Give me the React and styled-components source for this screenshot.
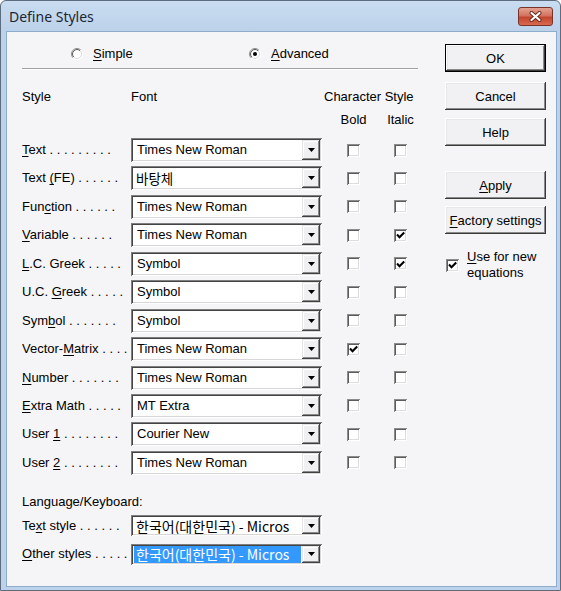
import { Fragment } from "react";
import styled, { createGlobalStyle } from "styled-components";

const GlobalStyle = createGlobalStyle`
  html, body { margin: 0; padding: 0; background: #ffffff; }
  body {
    font-family: "Liberation Sans", Arial, "Noto Sans CJK KR", sans-serif;
    font-size: 13px;
    color: #000;
  }
`;

const styleRows = [
  { pre: "", key: "T", post: "ext . . . . . . . . .", font: "Times New Roman" },
  { pre: "Text ", key: "(", post: "FE) . . . . . .", font: "바탕체", cjk: true },
  { pre: "Fun", key: "c", post: "tion . . . . . .", font: "Times New Roman" },
  { pre: "", key: "V", post: "ariable . . . . . .", font: "Times New Roman", italic: true },
  { pre: "", key: "L", post: ".C. Greek . . . . .", font: "Symbol", italic: true },
  { pre: "U.C. ", key: "G", post: "reek . . . . .", font: "Symbol" },
  { pre: "Sym", key: "b", post: "ol . . . . . . .", font: "Symbol" },
  { pre: "Vector-", key: "M", post: "atrix . . . .", font: "Times New Roman", bold: true },
  { pre: "", key: "N", post: "umber . . . . . . .", font: "Times New Roman" },
  { pre: "", key: "E", post: "xtra Math . . . . .", font: "MT Extra" },
  { pre: "User ", key: "1", post: " . . . . . . . .", font: "Courier New" },
  { pre: "User ", key: "2", post: " . . . . . . . .", font: "Times New Roman" },
];

// the IME name is cut by the drop button in the original dialog
const langRows = [
  { pre: "Te", key: "x", post: "t style  . . . . . .", value: "한국어(대한민국) - Micros" },
  { pre: "", key: "O", post: "ther styles . . . . .", value: "한국어(대한민국) - Micros", selected: true },
];

const Window = styled.div`
  box-sizing: border-box;
  width: 561px;
  height: 591px;
  border: 1px solid #5e6c7f;
  border-radius: 6px 6px 0 0;
  background: linear-gradient(#c9dcf0 0px, #bcd2ea 30px, #bcd2ea 100%);
  padding: 0 3px 3px 5px;
  display: flex;
  flex-direction: column;
  overflow: hidden;
`;

const TitleBar = styled.div`
  height: 30px;
  flex: none;
  display: flex;
  align-items: center;
  padding: 0 4px 0 3px;
`;

const Title = styled.div`
  font-family: "Noto Sans", "Liberation Sans", sans-serif;
  font-size: 14px;
  color: #1c2636;
`;

const CloseButton = styled.div`
  box-sizing: border-box;
  margin-left: auto;
  width: 35px;
  height: 19px;
  border: 1px solid #7a3327;
  border-radius: 3px;
  background: linear-gradient(#e2a394 0%, #d4735f 45%, #c4452d 55%, #d86a50 100%);
  display: flex;
  align-items: center;
  justify-content: center;
`;

const Client = styled.div`
  flex: 1;
  border: 1px solid #8eaccc;
  background: #f5f4f7;
  display: flex;
  gap: 27px;
  padding: 12px 9px 0 15px;
`;

const LeftPanel = styled.div`
  width: 396px;
  flex: none;
  display: flex;
  flex-direction: column;
`;

const RightPanel = styled.div`
  width: 101px;
  flex: none;
  display: flex;
  flex-direction: column;
`;

const RadioRow = styled.div`
  height: 18px;
  margin-top: 1px;
  display: grid;
  grid-template-columns: 178px auto;
  align-items: center;
  padding-left: 49px;
`;

const RadioOption = styled.div`
  display: flex;
  align-items: center;
  gap: 10px;
  line-height: 16px;
`;

const Separator = styled.div`
  margin-top: 5px;
  border-top: 1px solid #a0a0a0;
  border-bottom: 1px solid #ffffff;
`;

const Columns = styled.div`
  display: grid;
  grid-template-columns: 109px 191px 25px 13px 34px 13px;
  margin-top: ${(p) => p.$top}px;
  line-height: 16px;
  white-space: nowrap;
`;

const StyleGrid = styled(Columns)`
  grid-auto-rows: 28.45px;
  align-items: center;
`;

const LangGrid = styled.div`
  display: grid;
  grid-template-columns: 109px 191px;
  grid-auto-rows: 28.5px;
  align-items: center;
  margin-top: 1.75px;
`;

const Heading = styled.div`
  grid-column: ${(p) => p.$col};
  padding-left: ${(p) => p.$pad || 0}px;
`;

const CenterHeading = styled.div`
  grid-column: ${(p) => p.$col};
  display: flex;
  justify-content: center;
`;

const Label = styled.div`
  white-space: nowrap;
  overflow: hidden;
  line-height: 16px;
`;

const Plain = styled.div`
  margin-top: ${(p) => p.$top}px;
  line-height: 16px;
`;

const Combo = styled.div`
  box-sizing: border-box;
  height: ${(p) => p.$h}px;
  display: flex;
  padding: 2px;
  background: #ffffff;
  box-shadow: inset 1px 1px #7e7e7e, inset -1px -1px #ffffff,
    inset 2px 2px #444444, inset -2px -2px #d8d6d8;
`;

const ComboText = styled.div`
  flex: 1;
  min-width: 0;
  overflow: hidden;
  white-space: nowrap;
  display: flex;
  align-items: center;
  margin: 0 1px;
  padding-left: ${(p) => (p.$cjk ? 2 : 3)}px;
  font-family: ${(p) =>
    p.$cjk
      ? `"Noto Sans CJK KR", "Liberation Sans", sans-serif`
      : `"Liberation Sans", Arial, sans-serif`};
  font-size: ${(p) => p.$size || "13px"};
  background: ${(p) => (p.$selected ? "#3399ff" : "transparent")};
  color: ${(p) => (p.$selected ? "#ffffff" : "#000000")};
`;

const DropButton = styled.div`
  width: 18px;
  flex: none;
  background: #f0eff1;
  display: flex;
  align-items: center;
  justify-content: center;
  box-shadow: inset -1px -1px #404040, inset 1px 1px #e6e4e6,
    inset -2px -2px #8a8a8a, inset 2px 2px #ffffff;
`;

const CheckBox = styled.div`
  box-sizing: border-box;
  width: 13px;
  height: 13px;
  background: #ffffff;
  display: flex;
  align-items: center;
  justify-content: center;
  grid-column: ${(p) => p.$col || "auto"};
  box-shadow: inset 1px 1px #8c8c8c, inset -1px -1px #ffffff,
    inset 2px 2px #5c5c5c, inset -2px -2px #dedcde;
`;

const Button = styled.div`
  box-sizing: border-box;
  height: 28px;
  flex: none;
  margin-top: ${(p) => p.$gap || 0}px;
  display: flex;
  align-items: center;
  justify-content: center;
  background: #f1f0f2;
  border: ${(p) => (p.$default ? "1px solid #000" : "none")};
  box-shadow: inset -1px -1px #3a3a3a, inset 1px 1px #ffffff,
    inset -2px -2px #8a8a8a, inset 2px 2px #e8e6e8;
  white-space: nowrap;
`;

const CheckRow = styled.div`
  margin-top: 15px;
  display: flex;
  align-items: center;
  gap: 8px;
  padding-left: 1px;
  line-height: 16px;
`;

const Key = styled.span`
  text-decoration: underline;
  text-underline-offset: 2px;
`;

function Mnemonic({ pre, k, post }) {
  return (
    <>
      {pre}
      <Key>{k}</Key>
      {post}
    </>
  );
}

function Radio({ on }) {
  return (
    <svg width="12" height="12" viewBox="0 0 12 12">
      <defs>
        <linearGradient id="rOut" x1="0" y1="0" x2="1" y2="1">
          <stop offset="0.5" stopColor="#8a8a8a" />
          <stop offset="0.5" stopColor="#ffffff" />
        </linearGradient>
        <linearGradient id="rIn" x1="0" y1="0" x2="1" y2="1">
          <stop offset="0.5" stopColor="#555555" />
          <stop offset="0.5" stopColor="#dcdadc" />
        </linearGradient>
      </defs>
      <circle cx="6" cy="6" r="5.5" fill="#fff" stroke="url(#rOut)" strokeWidth="1" />
      <circle cx="6" cy="6" r="4.5" fill="#fff" stroke="url(#rIn)" strokeWidth="1" />
      {on && <circle cx="6" cy="6" r="2" fill="#000" />}
    </svg>
  );
}

function Check({ on, col }) {
  return (
    <CheckBox $col={col}>
      {on && (
        <svg width="9" height="8" viewBox="0 0 9 8">
          <path d="M1 3.6 L3.5 6.2 L8.2 1.4" fill="none" stroke="#000" strokeWidth="2.1" />
        </svg>
      )}
    </CheckBox>
  );
}

function Arrow() {
  return (
    <svg width="7" height="4" viewBox="0 0 7 4">
      <path d="M0 0 H7 L3.5 4 Z" fill="#000" />
    </svg>
  );
}

function ComboBox({ value, h, cjk, size, selected }) {
  return (
    <Combo $h={h}>
      <ComboText $cjk={cjk} $size={size} $selected={selected}>{value}</ComboText>
      <DropButton>
        <Arrow />
      </DropButton>
    </Combo>
  );
}

export default function App() {
  return (
    <>
      <GlobalStyle />
      <Window>
        <TitleBar>
          <Title>Define Styles</Title>
          <CloseButton>
            <svg width="13" height="11" viewBox="0 0 13 11">
              <path d="M2.5 2 L10.5 9 M10.5 2 L2.5 9" stroke="#6a2418" strokeWidth="4" strokeLinecap="round" />
              <path d="M2.5 2 L10.5 9 M10.5 2 L2.5 9" stroke="#ffffff" strokeWidth="2.2" strokeLinecap="round" />
            </svg>
          </CloseButton>
        </TitleBar>

        <Client>
          <LeftPanel>
            <RadioRow>
              <RadioOption>
                <Radio />
                <span><Key>S</Key>imple</span>
              </RadioOption>
              <RadioOption>
                <Radio on />
                <span><Key>A</Key>dvanced</span>
              </RadioOption>
            </RadioRow>
            <Separator />

            <Columns $top={19}>
              <Heading $col={1}>Style</Heading>
              <Heading $col={2}>Font</Heading>
              <Heading $col="3 / -1" $pad={2}>Character Style</Heading>
            </Columns>
            <Columns $top={7}>
              <CenterHeading $col={4}>Bold</CenterHeading>
              <CenterHeading $col={6}>Italic</CenterHeading>
            </Columns>

            <StyleGrid $top={7.8}>
              {styleRows.map((r) => (
                <Fragment key={r.pre + r.key}>
                  <Label>
                    <Mnemonic pre={r.pre} k={r.key} post={r.post} />
                  </Label>
                  <ComboBox value={r.font} h={24} cjk={r.cjk} size={r.cjk ? "13.5px" : "13px"} />
                  <Check on={r.bold} col={4} />
                  <Check on={r.italic} col={6} />
                </Fragment>
              ))}
            </StyleGrid>

            <Plain $top={16.8}>Language/Keyboard:</Plain>
            <LangGrid>
              {langRows.map((r) => (
                <Fragment key={r.key}>
                  <Label>
                    <Mnemonic pre={r.pre} k={r.key} post={r.post} />
                  </Label>
                  <ComboBox value={r.value} h={21} cjk size="14px" selected={r.selected} />
                </Fragment>
              ))}
            </LangGrid>
          </LeftPanel>

          <RightPanel>
            <Button $default>OK</Button>
            <Button $gap={10}>Cancel</Button>
            <Button $gap={8}>Help</Button>
            <Button $gap={25}><span><Key>A</Key>pply</span></Button>
            <Button $gap={7}><span><Key>F</Key>actory settings</span></Button>
            <CheckRow>
              <Check on />
              <span><Key>U</Key>se for new<br />equations</span>
            </CheckRow>
          </RightPanel>
        </Client>
      </Window>
    </>
  );
}
